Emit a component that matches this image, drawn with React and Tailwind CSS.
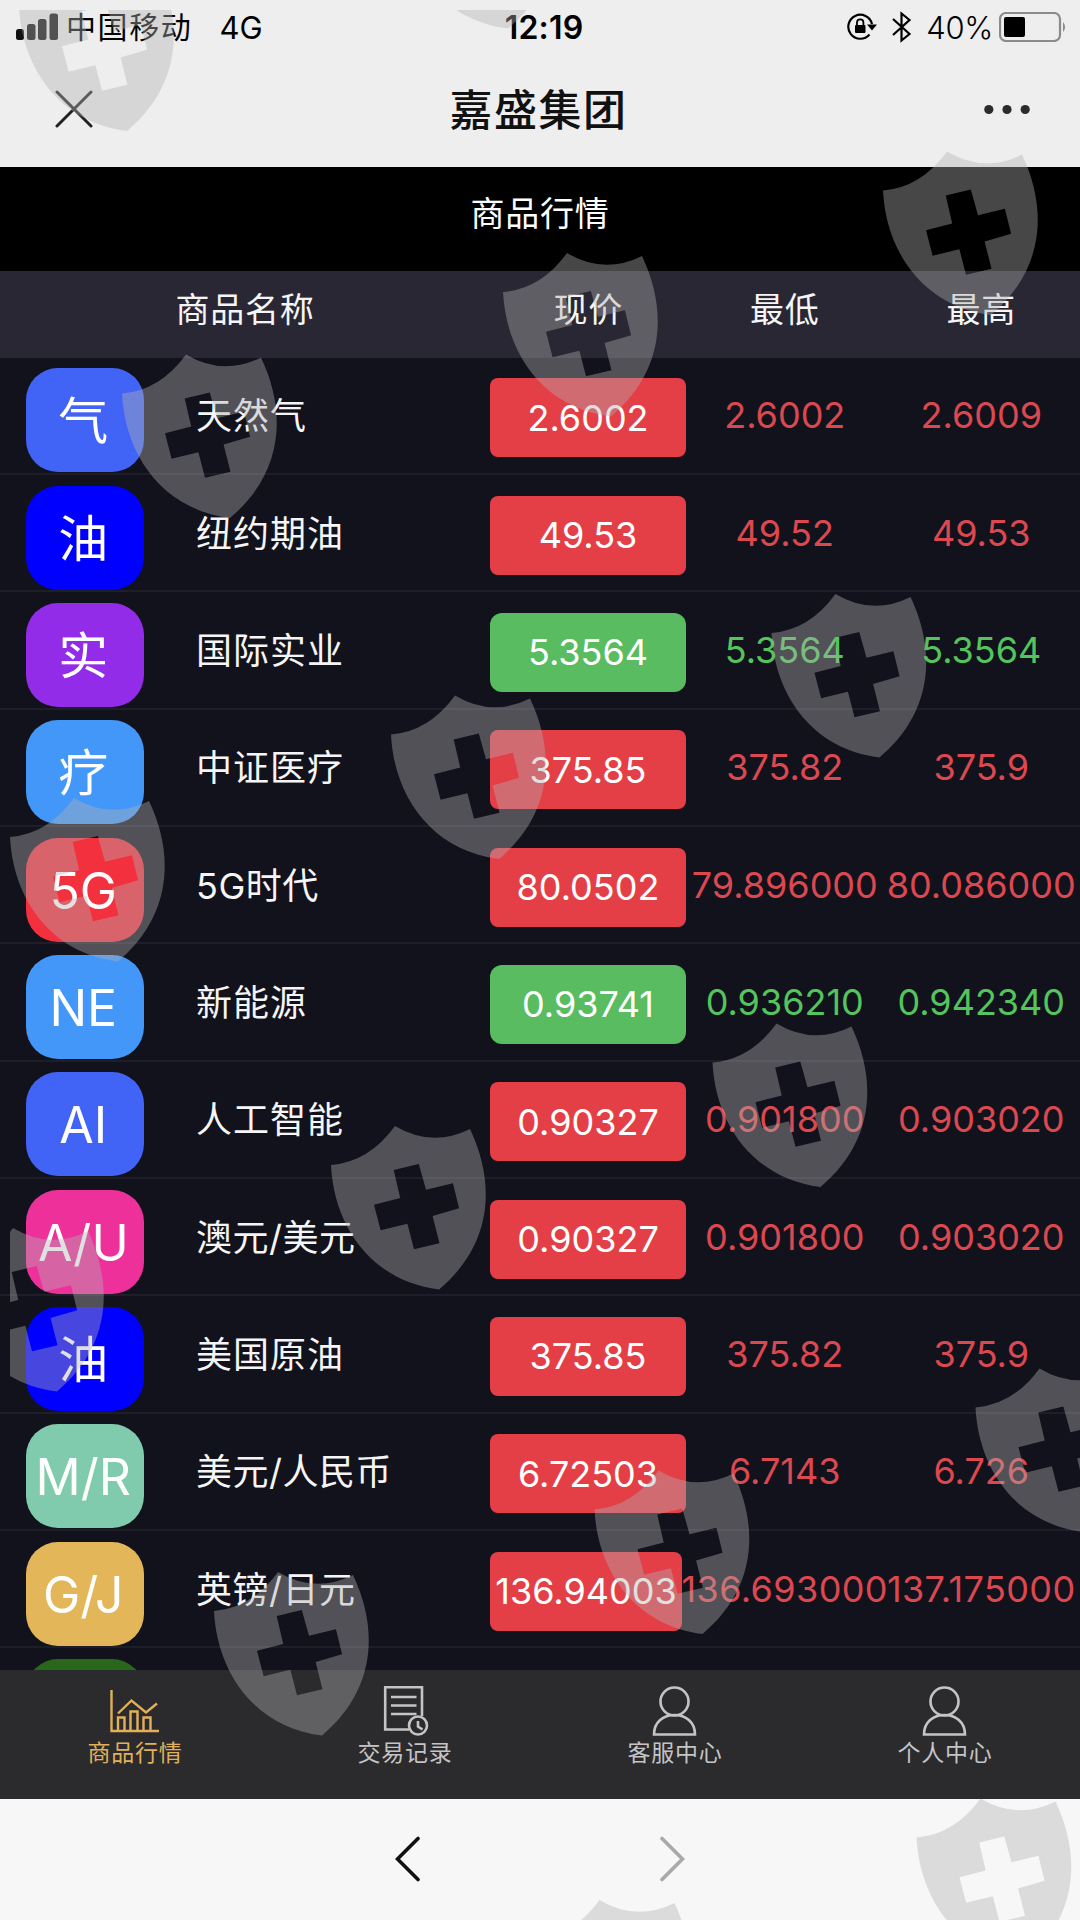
import React from 'react';

const rows = [
  { icon: '气', tile: 'bg-[#4164f6]', name: '天然气', price: '2.6002', low: '2.6002', high: '2.6009' },
  { icon: '油', tile: 'bg-[#0000fe]', name: '纽约期油', price: '49.53', low: '49.52', high: '49.53' },
  { icon: '实', tile: 'bg-[#932ce8]', name: '国际实业', price: '5.3564', low: '5.3564', high: '5.3564', up: true },
  { icon: '疗', tile: 'bg-[#4397f9]', name: '中证医疗', price: '375.85', low: '375.82', high: '375.9' },
  { icon: '5G', tile: 'bg-[#f3303d]', name: '5G时代', price: '80.0502', low: '79.896000', high: '80.086000' },
  { icon: 'NE', tile: 'bg-[#4397f9]', name: '新能源', price: '0.93741', low: '0.936210', high: '0.942340', up: true },
  { icon: 'AI', tile: 'bg-[#4164f6]', name: '人工智能', price: '0.90327', low: '0.901800', high: '0.903020' },
  { icon: 'A/U', tile: 'bg-[#ee309a]', name: '澳元/美元', price: '0.90327', low: '0.901800', high: '0.903020' },
  { icon: '油', tile: 'bg-[#0000fe]', name: '美国原油', price: '375.85', low: '375.82', high: '375.9' },
  { icon: 'M/R', tile: 'bg-[#80cbae]', name: '美元/人民币', price: '6.72503', low: '6.7143', high: '6.726' },
  { icon: 'G/J', tile: 'bg-[#e2b659]', name: '英镑/日元', price: '136.94003', low: '136.693000', high: '137.175000' },
  { icon: '', tile: 'bg-[#29681b]', name: '', price: '', low: '', high: '' },
];

// top left corner of every shield of the overlay
const shields = [
  [400, -135], [19, -32.5],
  [883, 151.5], [503, 253], [122, 354.5],
  [771.5, 594], [391, 695.5], [10, 798],
  [712.5, 1023.5], [331, 1126], [-51, 1228],
  [975.5, 1368.5], [594.5, 1470.5], [214, 1572],
  [916.5, 1798.5], [535.5, 1900],
];

const ShieldOverlay = () => (
  <svg className="absolute inset-0 pointer-events-none" width="1080" height="1920" viewBox="0 0 1080 1920">
    <defs>
      <clipPath id="area"><rect x="10" y="10" width="1070" height="1910" /></clipPath>
    </defs>
    <g clipPath="url(#area)" fill="#b1b1b1" fillOpacity="0.4" fillRule="evenodd">
      {shields.map(([x, y]) => (
        <path
          key={`${x},${y}`}
          transform={`translate(${x} ${y})`}
          d="M0 39Q38 36 64 0Q101 22 139 3C166 60 160 120 108 163.5C40 155 3 100 0 39ZM62.7 44L69.2 72L43 78.7L49.6 104.3L76.4 97.7L83 123.3L108.5 117.3L101.6 90L128.1 82.3L121.9 57.3L95 63.7L87.8 38Z"
        />
      ))}
    </g>
  </svg>
);

const StatusBar = () => (
  <div className="h-[54px] flex items-center pl-4 pr-[13px] text-[30px] leading-none text-black">
    <div className="flex-1 flex items-center">
      <svg width="42" height="28" viewBox="0 0 42 28" fill="#111">
        <rect x="0" y="16" width="8" height="11" rx="2.5" />
        <rect x="11" y="11" width="8.5" height="16" rx="2.5" />
        <rect x="22" y="6" width="8.5" height="21" rx="2.5" />
        <rect x="33.5" y="0.5" width="8.5" height="26.5" rx="2.5" />
      </svg>
      <span className="ml-2 tracking-[1.6px]">中国移动</span>
      <span className="ml-[27px] text-[31px]">4G</span>
    </div>
    <div className="ml-[5px] mt-0.5 text-[32px] font-semibold tracking-[0.2px]">12:19</div>
    <div className="flex-1 flex items-center justify-end">
      <svg width="30" height="30" viewBox="0 0 30 30" fill="none" stroke="#000" strokeWidth="2.2">
        <path d="M25 12A12 12 0 1 0 22.5 22.5" />
        <path d="M20 12.5H30L25 18.5Z" fill="#000" stroke="none" />
        <rect x="8" y="13" width="10.5" height="8" rx="1" fill="#000" stroke="none" />
        <path d="M10 13V10.5A3.2 3.2 0 0 1 16.4 10.5V13" strokeWidth="1.8" />
      </svg>
      <svg className="ml-[15px]" width="20" height="32" viewBox="0 0 20 32" fill="none" stroke="#000" strokeWidth="2.2">
        <path d="M1 8L17.5 23L9.5 29.5V2.5L17.5 9L1 24" />
      </svg>
      <span className="ml-[14px] text-[31px] tracking-[-0.3px] font-light">40%</span>
      <svg className="ml-1.5" width="68" height="30" viewBox="0 0 68 30">
        <rect x="1" y="1" width="60" height="28" rx="6" fill="none" stroke="#8b8b8b" strokeWidth="2.2" />
        <rect x="5" y="5" width="21" height="20" rx="2" fill="#000" />
        <path d="M64 10A7 7 0 0 1 64 20Z" fill="#8b8b8b" />
      </svg>
    </div>
  </div>
);

const TitleBar = () => (
  <div className="h-[113px] flex items-start justify-between pl-[55px] pr-[50px]">
    <svg className="mt-[36px]" width="38" height="38" viewBox="0 0 38 38" stroke="#222" strokeWidth="3" strokeLinecap="round">
      <path d="M2 2L36 36M36 2L2 36" />
    </svg>
    <h1 className="mt-[29px] text-[43px] leading-[54px] tracking-[1.5px] font-medium text-[#111]">嘉盛集团</h1>
    <svg className="mt-[50px]" width="46" height="11" viewBox="0 0 46 11" fill="#2b2b2b">
      <circle cx="4.8" cy="5.5" r="4.6" />
      <circle cx="23" cy="5.5" r="4.6" />
      <circle cx="41.2" cy="5.5" r="4.6" />
    </svg>
  </div>
);

const Quote = ({ value, up }) => (
  <div className={`w-[196.5px] shrink-0 flex justify-center ${value.length > 9 ? 'tracking-[0.4px]' : ''} ${up ? 'text-[#54c45d]' : 'text-[#dc4850]'}`}>
    {value}
  </div>
);

const ProductRow = ({ icon, tile, name, price, low, high, up }) => (
  <div className="h-[117.35px] shrink-0 flex items-center border-b-2 border-[#1e1e29] text-[36px] leading-none">
    <div className="w-[490px] shrink-0 flex items-center pl-[26px]">
      <div className={`w-[117.5px] h-[104px] mt-[10px] pt-0.5 pr-[3px] rounded-[32px] flex items-center justify-center text-[50px] text-white ${tile}`}>
        {icon}
      </div>
      <span className={`ml-[52.5px] mt-[2px] text-[#f5f5f5] ${/[/G]/.test(name) ? 'tracking-[0.5px]' : 'tracking-[1px]'}`}>{name}</span>
    </div>
    <div className="w-[196.5px] shrink-0">
      {price && (
        <div className={`h-[79px] mt-[5px] flex items-center justify-center text-white ${up ? 'bg-[#59bc60] rounded-xl' : 'bg-[#e43f46] rounded-lg'} ${price.length > 8 ? 'w-[192px]' : 'w-[196px]'}`}>
          {price}
        </div>
      )}
    </div>
    <Quote value={low} up={up} />
    <Quote value={high} up={up} />
  </div>
);

const ChartIcon = () => (
  <svg width="50" height="50" viewBox="0 0 50 50" fill="none" stroke="currentColor" strokeWidth="2.4">
    <path d="M1.5 4V45H49M8 27.5L21.5 14.5L36 26.5L47 17.5" />
    <path d="M8 45V31.5H14.5V45M20.5 45V25.5H27.5V45M33.5 45V31.5H40.5V45" />
  </svg>
);

const RecordIcon = () => (
  <svg width="50" height="50" viewBox="0 0 50 50" fill="none" stroke="currentColor" strokeWidth="2.6">
    <path d="M29 43.5H5.2V1.3H42V30M11 11H36.5M11 19.5H36.5M11 28H36.5" />
    <circle cx="38" cy="39.5" r="9" />
    <path d="M38 35V40.5L42.5 43.5" />
  </svg>
);

const UserIcon = () => (
  <svg width="50" height="50" viewBox="0 0 50 50" fill="none" stroke="currentColor" strokeWidth="2.6">
    <circle cx="24.5" cy="15.5" r="14" />
    <path d="M4 48.5C4 36 13.5 29 24.5 29S45 36 45 48.5Z" />
  </svg>
);

const tabs = [
  { label: '商品行情', Icon: ChartIcon, active: true },
  { label: '交易记录', Icon: RecordIcon },
  { label: '客服中心', Icon: UserIcon },
  { label: '个人中心', Icon: UserIcon },
];

const App = () => (
  <div className="relative w-[1080px] h-[1920px] overflow-hidden flex flex-col bg-[#12121c] font-[Inter,'Noto_Sans_CJK_SC',sans-serif]">
    <header className="h-[167px] shrink-0 bg-[#eeeeee]">
      <StatusBar />
      <TitleBar />
    </header>

    <div className="h-[104px] shrink-0 bg-black text-white text-[34px] leading-[94px] tracking-[0.8px] text-center">商品行情</div>

    <div className="h-[86.5px] shrink-0 flex bg-[#282733] text-[#f5f5f5] text-[34px] leading-[78px] tracking-[0.8px] text-center">
      <div className="w-[490px]">商品名称</div>
      <div className="w-[196.5px]">现价</div>
      <div className="w-[196.5px]">最低</div>
      <div className="w-[196.5px]">最高</div>
    </div>

    <main className="flex-1 min-h-0 overflow-hidden flex flex-col">
      {rows.map((row, i) => <ProductRow key={i} {...row} />)}
    </main>

    <nav className="h-[129px] shrink-0 grid grid-cols-4 bg-[#2b2b2d]">
      {tabs.map(({ label, Icon, active }) => (
        <div key={label} className={`flex flex-col items-center pt-4 ${active ? 'text-[#e2b058]' : 'text-[#c4c4c4]'}`}>
          <Icon />
          <span className="mt-1 text-[23px] leading-[26px] tracking-[0.8px]">{label}</span>
        </div>
      ))}
    </nav>

    <footer className="h-[121px] shrink-0 flex justify-center gap-[238px] pt-[37px] bg-[#f7f7f7]">
      <svg width="26" height="46" viewBox="0 0 26 46" fill="none" stroke="#111" strokeWidth="3.6" strokeLinecap="round">
        <path d="M23 2.5L2.5 23L23 43.5" />
      </svg>
      <svg width="26" height="46" viewBox="0 0 26 46" fill="none" stroke="#a9a9a9" strokeWidth="3.6" strokeLinecap="round">
        <path d="M3 2.5L23.5 23L3 43.5" />
      </svg>
    </footer>

    <ShieldOverlay />
  </div>
);

export default App;
